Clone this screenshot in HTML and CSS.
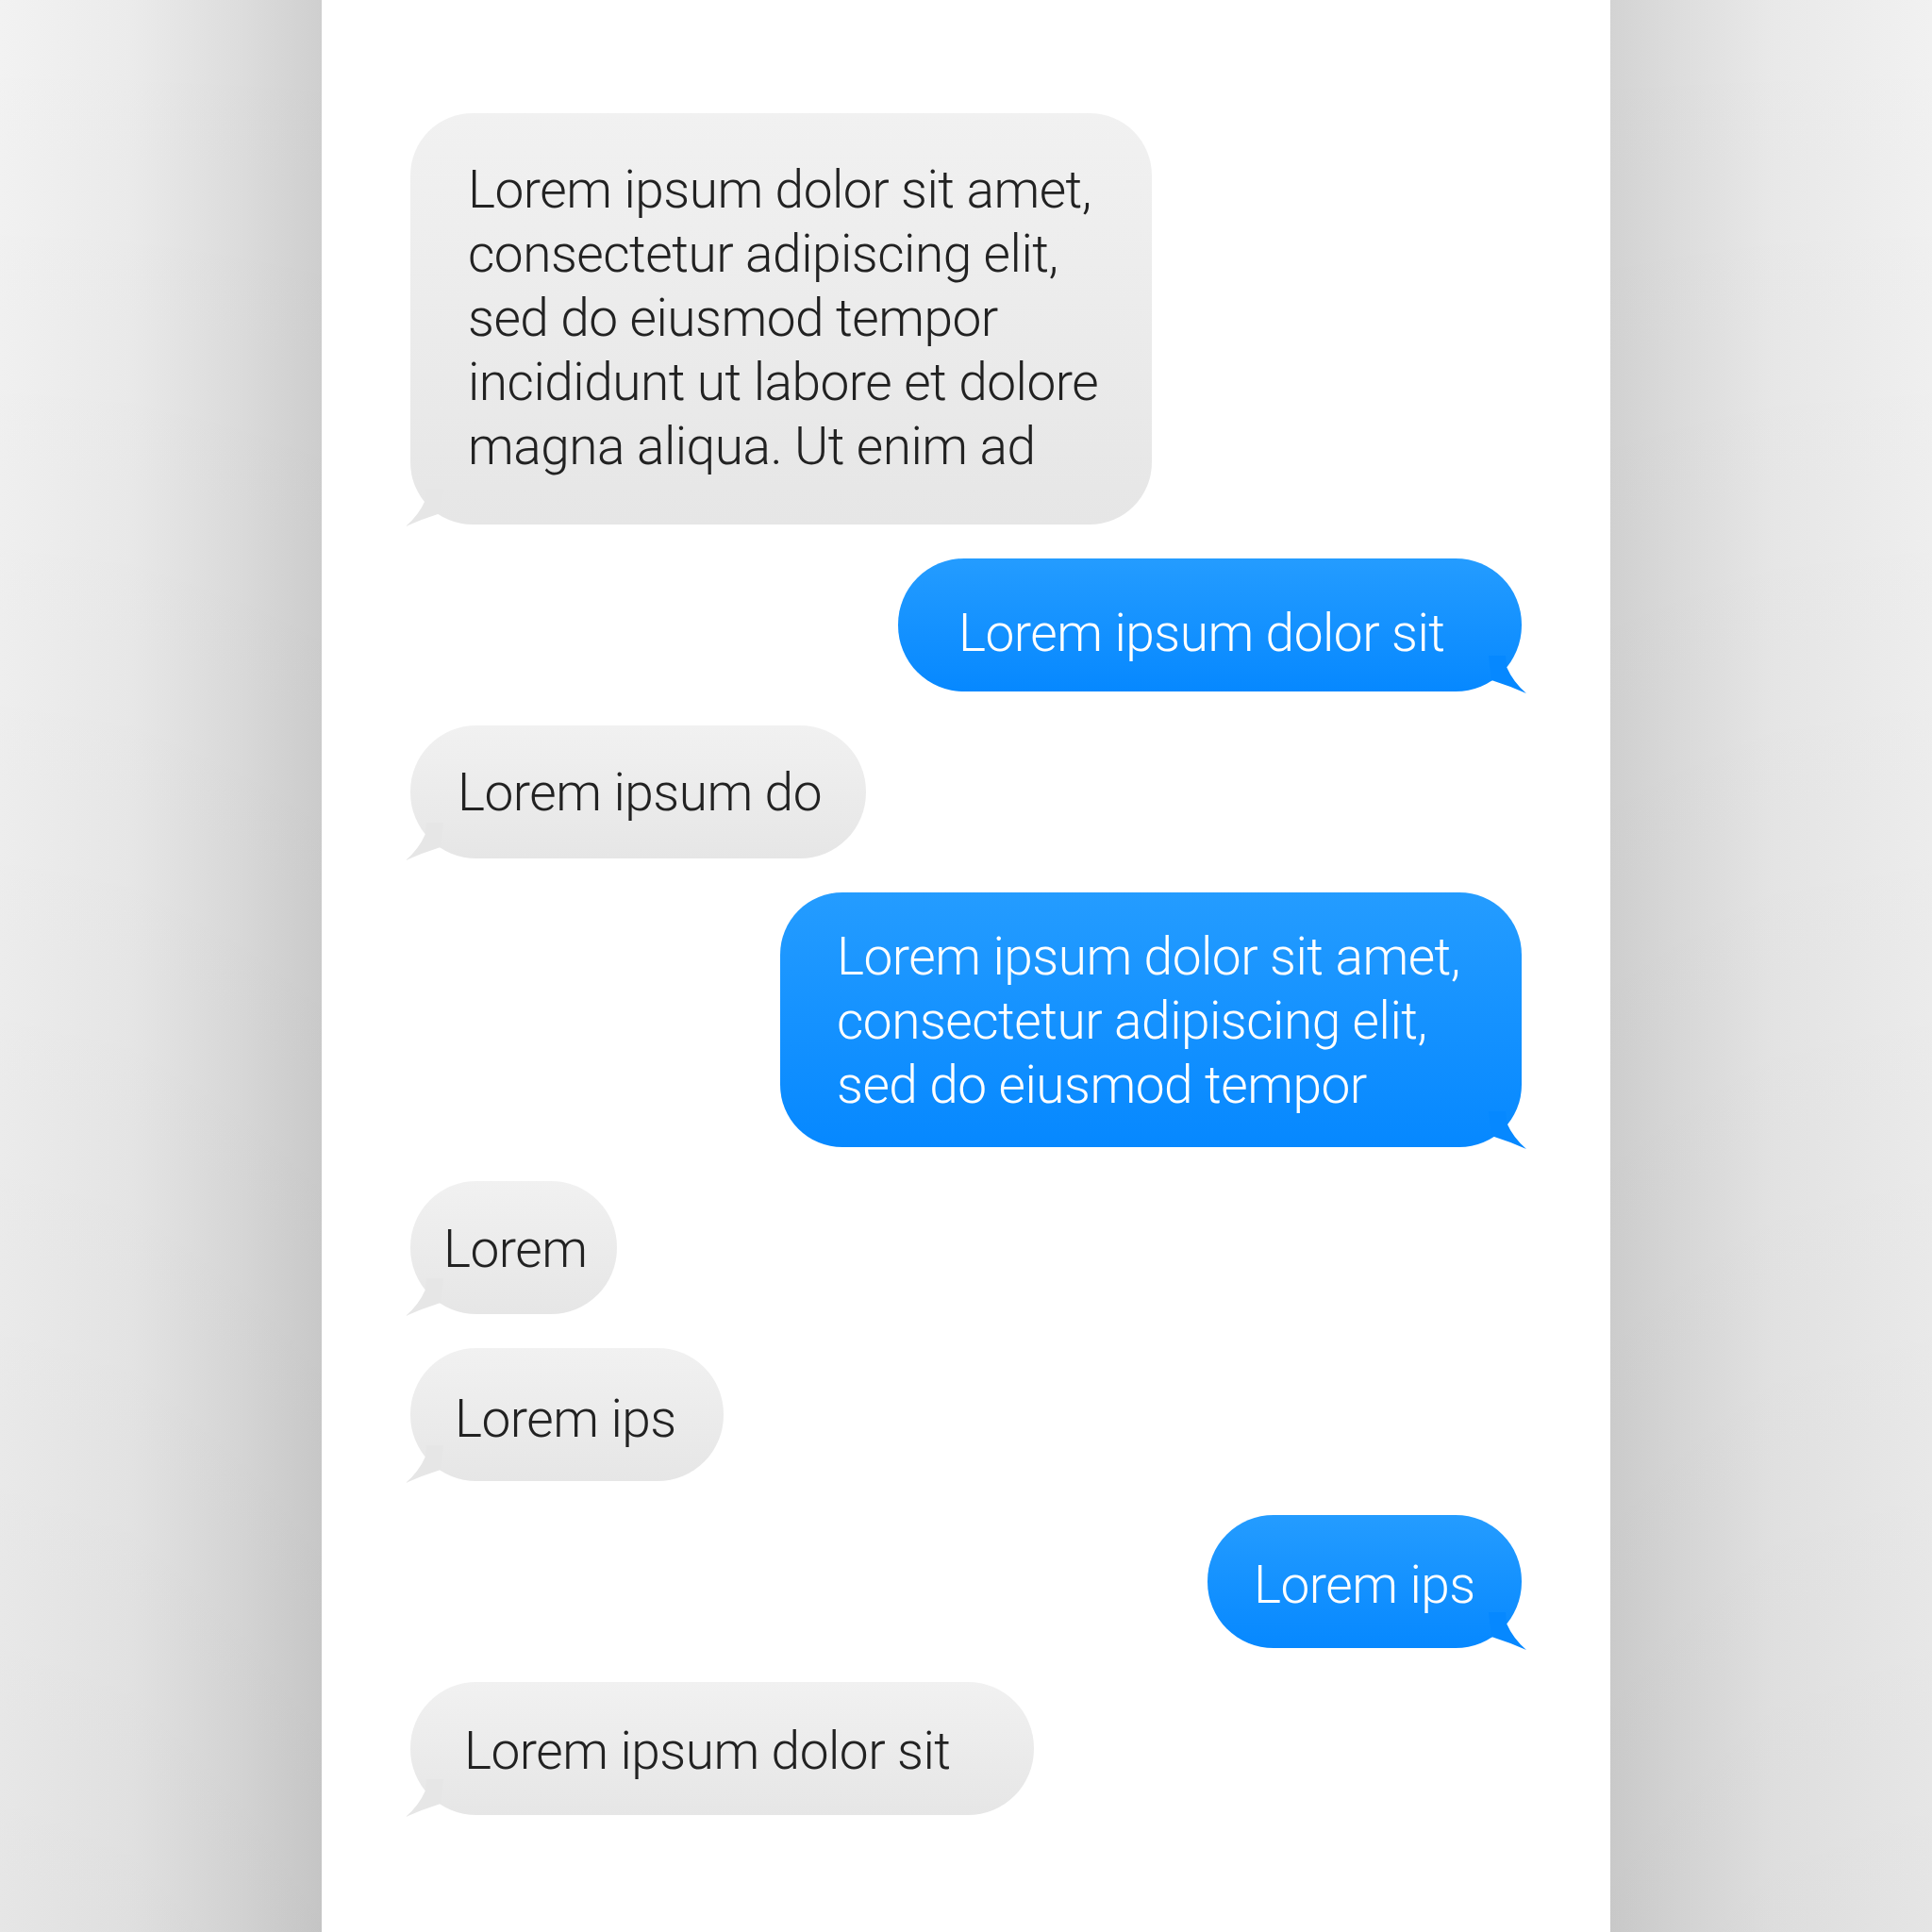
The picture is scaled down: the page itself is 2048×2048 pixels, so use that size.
FILE: index.html
```html
<!DOCTYPE html>
<html lang="en">
<head>
    <meta charset="UTF-8">
    <meta name="viewport" content="width=device-width, initial-scale=1.0">
    <title>Chat Bubbles</title>
    <link rel="stylesheet" href="styles.css">
</head>
<body>

    <div class="chat">
        <div class="bubble in msg-1">Lorem ipsum dolor sit amet,<br>consectetur adipiscing elit,<br>sed do eiusmod tempor<br>incididunt ut labore et dolore<br>magna aliqua. Ut enim ad</div>

        <div class="bubble out msg-2">Lorem ipsum dolor sit</div>

        <div class="bubble in msg-3">Lorem ipsum do</div>

        <div class="bubble out msg-4">Lorem ipsum dolor sit amet,<br>consectetur adipiscing elit,<br>sed do eiusmod tempor</div>

        <div class="bubble in msg-5">Lorem</div>

        <div class="bubble in msg-6">Lorem ips</div>

        <div class="bubble out msg-7">Lorem ips</div>

        <div class="bubble in msg-8">Lorem ipsum dolor sit</div>
    </div>

</body>
</html>
```

FILE: styles.css
```css
html, body {
    margin: 0;
    padding: 0;
}

body {
    min-height: 2048px;
    display: flex;
    justify-content: center;
    font-family: Roboto, 'Liberation Sans', sans-serif;
    background:
        linear-gradient(to bottom, rgba(0, 0, 0, 0) 0%, rgba(0, 0, 0, 0.05) 100%),
        linear-gradient(to right, #f2f2f2 0px, #ebebeb 140px, #dcdcdc 260px, #cfcfcf 341px,
            #d3d3d3 1707px, #dddddd 1780px, #e9e9e9 1880px, #f1f1f1 2048px);
}

.chat {
    width: 1366px;
    min-height: 2048px;
    box-sizing: border-box;
    background-color: #fff;
    padding: 120px 94px;
    display: flex;
    flex-direction: column;
    align-items: flex-start;
    gap: 36px;
}


.bubble {
    position: relative;
    box-sizing: border-box;
    height: 141px;
    padding-top: 40px;
    border-radius: 70px;
    font-size: 55px;
    font-weight: 300;
    letter-spacing: -0.5px;
    line-height: 68px;
    white-space: nowrap;
}

.bubble::after {
    content: '';
    position: absolute;
    bottom: -2px;
    width: 40px;
    height: 40px;
}

.bubble.in {
    color: #222;
    background: linear-gradient(to bottom, #f1f1f1, #e6e6e6);
}

.bubble.in::after {
    left: -5px;
    background-color: #e6e6e6;
    clip-path: path('M 22 0 L 21 12 Q 14 28 0 40 Q 18 32 37 26 L 40 0 Z');
}

.bubble.out {
    align-self: flex-end;
    color: #fff;
    background: linear-gradient(to bottom, #249cff, #0688ff);
}

.bubble.out::after {
    right: -5px;
    background-color: #0688ff;
    clip-path: path('M 18 0 L 19 12 Q 26 28 40 40 Q 22 32 3 26 L 0 0 Z');
}


/* per message sizes */
.msg-1 {
    width: 786px;
    height: 436px;
    padding: 47px 0 0 61px;
    border-radius: 66px;
}

.msg-2 {
    width: 661px;
    padding: 45px 0 0 64px;
}

.msg-3 {
    width: 483px;
    padding: 37px 0 0 50px;
}

.msg-4 {
    width: 786px;
    height: 270px;
    padding: 34px 0 0 60px;
    border-radius: 66px;
}

.msg-5 {
    width: 219px;
    padding: 38px 0 0 35px;
}

.msg-6 {
    width: 332px;
    padding: 41px 0 0 47px;
}

.msg-7 {
    width: 333px;
    padding: 40px 0 0 49px;
}

.msg-8 {
    width: 661px;
    padding: 39px 0 0 57px;
}
```
